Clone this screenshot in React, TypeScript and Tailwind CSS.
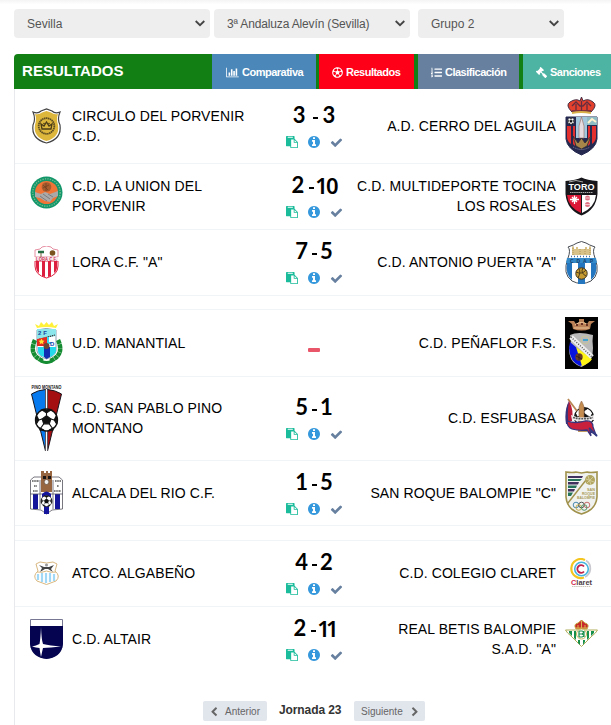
import type { ReactNode } from "react";
import { FaRegFutbol, FaListOl, FaGavel } from "react-icons/fa";

function Glyph({ d, w = 1792, className }: { d: string; w?: number; className?: string }) {
  return (
    <svg viewBox={`0 0 ${w} 1792`} fill="currentColor" className={className} aria-hidden="true">
      <path d={d} />
    </svg>
  );
}

const CHART = "M640 896v512h-256v-512h256zm384-512v1024h-256v-1024h256zm1024 1152v128h-2048v-1536h128v1408h1920zm-640-896v768h-256v-768h256zm384-384v1152h-256v-1152h256z";
const PASTE = "M768 1664h896v-640h-416q-40 0-68-28t-28-68v-416h-384v1152zm256-1440v-64q0-13-9.5-22.5t-22.5-9.5h-704q-13 0-22.5 9.5t-9.5 22.5v64q0 13 9.5 22.5t22.5 9.5h704q13 0 22.5-9.5t9.5-22.5zm256 672h299l-299-299v299zm512 128v672q0 40-28 68t-68 28h-960q-40 0-68-28t-28-68v-160h-544q-40 0-68-28t-28-68v-1344q0-40 28-68t68-28h1088q40 0 68 28t28 68v328q21 13 36 28l408 408q28 28 48 76t20 88z";
const INFO = "M1152 1376v-160q0-14-9-23t-23-9h-96v-512q0-14-9-23t-23-9h-320q-14 0-23 9t-9 23v160q0 14 9 23t23 9h96v320h-96q-14 0-23 9t-9 23v160q0 14 9 23t23 9h448q14 0 23-9t9-23zm-128-896v-160q0-14-9-23t-23-9h-192q-14 0-23 9t-9 23v160q0 14 9 23t23 9h192q14 0 23-9t9-23zm640 416q0 209-103 385.5t-279.5 279.5-385.5 103-385.5-103-279.5-279.5-103-385.5 103-385.5 279.5-279.5 385.5-103 385.5 103 279.5 279.5 103 385.5z";
const CHECK = "M1671 566q0 40-28 68l-724 724-136 136q-28 28-68 28t-68-28l-136-136-362-362q-28-28-28-68t28-68l136-136q28-28 68-28t68 28l294 295 656-657q28-28 68-28t68 28l136 136q28 28 28 68z";
const LEFT = "M1427 301l-531 531 531 531q19 19 19 45t-19 45l-166 166q-19 19-45 19t-45-19l-742-742q-19-19-19-45t19-45l742-742q19-19 45-19t45 19l166 166q19 19 19 45t-19 45z";

/* ---- club crests ---- */

function Crest({ w = 33, h, className = "", children }: { w?: number; h: number; className?: string; children: ReactNode }) {
  return <svg width={w} height={h} viewBox={`0 0 ${w} ${h}`} className={`block shrink-0 ${className}`}>{children}</svg>;
}

function Ball({ x, y, r }: { x: number; y: number; r: number }) {
  return (
    <g transform={`translate(${x} ${y}) scale(${r / 10})`}>
      <circle r="10" fill="#fff" stroke="#111" strokeWidth="1.2" />
      <path d="M0-4 4-1 2.5 3.5h-5L-4-1z M-4-9 4-9 0-6.5z M9-4 7 0 9.5 4z M-9-4-7 0-9.5 4z M-6 7-2 9.5-6 9z M6 7 2 9.5 6 9z" fill="#111" stroke="#111" strokeWidth="1" />
      <path d="M0-4V-7M4-1 7 0M-4-1-7 0M2.5 3.5 5 7M-2.5 3.5-5 7" stroke="#111" strokeWidth="1" />
    </g>
  );
}

const Circulo = () => (
  <Crest h={36}>
    <path d="M3 4Q8 6 11 3L16.500 1 22 3Q25 6 30 4 27 11 30 17 32 31 16.500 35 1 31 3 17 6 11 3 4z" fill="#fff" stroke="#444" strokeWidth="1.200" />
    <path d="M5 6Q9 7 12 4.500L16.500 3 21 4.500Q24 7 28 6 26 11 28 17 30 29 16.500 33 3 29 5 17 7 11 5 6z" fill="#ddb63c" />
    <circle cx="16.500" cy="18" r="7.800" fill="none" stroke="#5a4b20" strokeWidth="1.800" strokeDasharray="1.500 .5" />
    <path d="M12 21 11 16 14 18 16.500 14 19 18 22 16 21 21z" fill="none" stroke="#4a3c16" strokeWidth="1.300" />
    <circle cx="14" cy="15.500" r=".8" fill="#4a3c16" /><circle cx="19" cy="15.500" r=".8" fill="#4a3c16" />
  </Crest>
);

const Union = () => (
  <Crest h={33} className="mb-2">
    <circle cx="16.500" cy="16.500" r="16" fill="#12966a" />
    <circle cx="16.500" cy="16.500" r="13.700" fill="none" stroke="#76bd91" strokeWidth="1.300" strokeDasharray="1.300 1.200" />
    <circle cx="16.500" cy="16.500" r="11.500" fill="#f07436" />
    <circle cx="16.500" cy="11" r="4.800" fill="#a65c2d" />
    <path d="M13 9 18 14M13 12 19 9M16 7V15" stroke="#6e3d20" strokeWidth=".7" />
    <path d="M5 16 11 18 15 16 20 18 28 15 28 20 23 22 20 26 15 25 10 22 5 21z" fill="#a9a9a9" />
    <path d="M13 18 20 23M10 20 17 25M18 18 23 21" stroke="#74706d" strokeWidth=".8" />
  </Crest>
);

const Lora = () => (
  <Crest h={33}>
    <path d="M5 4 10 3 12 1Q16.500-1 21 1L23 3 28 4 28 11H5z" fill="#fff" stroke="#e0748b" strokeWidth=".8" />
    <path d="M5 15H28V20Q28 29 16.500 32 5 29 5 20z" fill="#fff" stroke="#df2543" />
    <path d="M6 15H9V27Q6 25 6 20zM12 15H15V31L12 30zM18 15H21V30L18 31zM24 15H27V22Q27 25 24 27z" fill="#dc1f3e" />
    <path d="M8 6H14" stroke="#246c42" strokeWidth="2.500" /><path d="M11 7V11" stroke="#786242" />
    <circle cx="22.500" cy="7" r="2.800" fill="#79521d" />
    <rect x="5" y="11" width="23" height="4" fill="#fbe8ec" />
    <text x="6" y="14.800" fontSize="4.500" fontWeight="700" fill="#c73251" textLength="21" lengthAdjust="spacingAndGlyphs">LORA C.F.</text>
  </Crest>
);

const Manantial = () => (
  <Crest h={42}>
    <path d="M5 18Q-2 33 13 39M28 18Q35 33 20 39" fill="none" stroke="#158b32" strokeWidth="4.500" strokeDasharray="4 .3" />
    <path d="M11 39Q16.500 42 22 39" fill="none" stroke="#158b32" strokeWidth="3" />
    <path d="M7 6 5 2 9 4 11 0 14 3 16.500 0 19 3 22 0 24 4 28 2 26 6Q16 4 7 6z" fill="#fff13a" />
    <path d="M7 8Q16 5 26 8V29Q25 34 16.500 37 8 34 7 29z" fill="#fff" stroke="#57778c" strokeWidth=".7" />
    <path d="M7 7H26V14L7 17z" fill="#8ce7ed" />
    <text x="8" y="13" fontSize="6" fontWeight="700" fill="#1744a0">2 F</text>
    <path d="M7 18 25 13" stroke="#333" strokeWidth="1.200" strokeDasharray="1.500 .7" />
    <path d="M7 17 17 15V24H7z" fill="#e52b20" /><path d="m11.500 16.500 1 2 2 .2-1.500 1.500.4 2-1.900-1-1.900 1 .4-2-1.500-1.500 2-.2z" fill="#ffe52e" />
    <path d="M18 15V21H21" fill="none" stroke="#3bd8f1" strokeWidth="2" />
    <text x="20" y="24" fontSize="6" fontWeight="700" fill="#183eb1">D</text>
    <path d="M8 25H14V35Q8 33 8 29zM20 25H26V29Q25 33 20 35z" fill="#25d9ec" /><path d="M14 25H20V35L16.500 37 14 35z" fill="#102eb1" />
    <circle cx="16.500" cy="24" r="3" fill="#6c4632" />
  </Crest>
);

const PinoMontano = () => (
  <Crest h={68} className="overflow-visible">
    <text x="1.500" y="5" fontSize="4.500" fontWeight="700" fill="#111" textLength="30" lengthAdjust="spacingAndGlyphs">PINO MONTANO</text>
    <path d="M1.500 10Q8 6 15.500 5.500V67z" fill="#087af0" stroke="#17151d" />
    <path d="M31.500 10Q25 6 17.500 5.500V67z" fill="#a40f12" stroke="#17151d" />
    <path d="M16.500 6V67" stroke="#fff" strokeWidth="1.600" />
    <Ball x={16.500} y={36} r={11} />
  </Crest>
);

const Alcala = () => (
  <Crest h={44}>
    <path d="M.5 9 4 6H29L32.500 9V38L22 39 16.500 43 11 39 .5 38z" fill="#fff" stroke="#55545e" strokeWidth=".8" />
    <path d="M3 23H8V38H3zM25 23H30V38H25zM14 35H19V43H14z" fill="#15159b" />
    <path d="M0 23H33M10 9V38M23 9V38" stroke="#575765" strokeWidth=".8" />
    <path d="M11 0V21H22V0H20V2H18V0H16V2H14V0z" fill="#976641" />
    <path d="M13 5H16V8H13zM18 5H21V8H18z" fill="#1b1516" /><circle cx="16.500" cy="11" r="2.500" fill="#eee" stroke="#765d4b" />
    <path d="M12 23Q16.500 18 21 23V26H12z" fill="#15159b" />
    <path d="M2 10H9M4 15H7M3 20H8M25 10H31M27 15H29M24 20H31" stroke="#555" strokeWidth="1.300" strokeDasharray="1.200 .4" />
    <Ball x={16.500} y={30} r={5.500} />
  </Crest>
);

const Algabeno = () => (
  <Crest h={24}>
    <path d="M6 3 10 1 16.500 2 23 1 27 3 25 10Q31 15 26 20L16.500 23.500 7 20Q2 15 8 10z" fill="#fff" stroke="#d9b880" />
    <path d="M8 13V19M12 12V21M16 12V22M20 12V21M24 13V20" stroke="#a1d8f5" strokeWidth="2.200" />
    <path d="M9 4 14 6 19 6 24 4 21 8 23 11 18 8 15 8 10 11 12 7z" fill="#444" />
    <path d="M7 11Q12 12 16.500 10 21 12 26 11" fill="none" stroke="#d9b880" />
    <circle cx="16.500" cy="4" r="1.500" fill="#999" />
  </Crest>
);

const Altair = () => (
  <Crest h={40}>
    <path d="M.5.5H32.500V25C32 34 25 38 16.500 39.500 8 38 1 34 .5 25z" fill="#fff" stroke="#777794" />
    <path d="M0 7H33V25C32 35 25 39 16.500 40 8 39 1 35 0 25z" fill="#040451" />
    <path d="M11 8Q11.500 21 13 25 20 26.500 31 27.500 20 28.500 13 29 12 33 11 38 10 33 9.500 29 6 28.500 2 27.500 6 26.500 9.500 25 10.500 20 11 8z" fill="#fff" />
  </Crest>
);

const Cerro = () => (
  <Crest h={59}>
    <path d="M7 15Q0 8 5 5 11 1 15 4L16.500 0 18 4Q23 1 28 5 33 8 26 15z" fill="#e3402d" stroke="#432d43" />
    <path d="M7 9 11 5 15 9 18 9 22 5 26 9M7 14H26M11 7V13M22 7V13M16.500 4V14" fill="none" stroke="#632d40" strokeWidth="1.300" />
    <path d="M7 16Q16 14 26 16" stroke="#d8b14b" strokeWidth="2" fill="none" />
    <path d="M1 20H32V42Q31 52 16.500 58 2 52 1 42z" fill="#252950" stroke="#252950" />
    <path d="M2 29H6V47Q2 44 2 40zM27 29H31V40Q31 44 27 47z" fill="#e3302f" />
    <path d="M8 29H10V49L8 47zM23 29H25V47L23 49z" fill="#e3302f" />
    <path d="M11 20H22V41H11z" fill="#a2c8dd" /><path d="M14 41V29L16.500 20 19 29V41z" fill="#e5dce1" stroke="#9b695d" strokeWidth=".6" />
    <path d="M22 20H32V28H22z" fill="#8ebcc5" /><path d="M23 26 27 22 31 25" fill="none" stroke="#fff4cd" strokeWidth="2" />
    <Ball x={6} y={24} r={3.300} />
    <path d="M8 39 13 46 16.500 41 20 46 26 39 22 49 16.500 52 11 49z" fill="#a8864a" stroke="#342c34" strokeWidth=".8" />
    <path d="M8 50Q16.500 55 25 50" stroke="#8c8394" fill="none" strokeDasharray="1 1" />
  </Crest>
);

const Toro = () => (
  <Crest h={39}>
    <path d="M.5 4Q11 3 16.500.5 22 3 32.500 4V17Q31 33 16.500 38.500 2 33 .5 17z" fill="#17171b" />
    <path d="M2 18H16V36Q3 30 2 18z" fill="#dc1635" /><path d="M17 18H31Q30 30 17 36z" fill="#fff" />
    <text x="3.500" y="13" fontSize="9" fontWeight="700" fill="#fff" textLength="26" lengthAdjust="spacingAndGlyphs">TORO</text>
    <path d="M4 5Q11 2 18 5" stroke="#ccc" strokeWidth=".8" fill="none" />
    <path d="M5 15.500H28" stroke="#aaa" strokeWidth="1.200" strokeDasharray="1.500 .6" />
    <path d="M9.500 18.500V27M5 22.500H14M7 20 12 25M12 20 7 25" stroke="#fff" strokeWidth="1.300" />
    <circle cx="22.500" cy="21" r="2.500" fill="#df7183" /><circle cx="22.500" cy="27.500" r="2.500" fill="#df7183" />
    <path d="M20 21H25M20 27.500H25" stroke="#fff" strokeWidth=".6" />
  </Crest>
);

const Puerta = () => (
  <Crest h={43}>
    <path d="M3 17Q6 9 3 6 9 4 12 2 16.500-1 21 2 24 4 30 6 27 9 30 17 36 33 26 40 16.500 45 7 40-3 33 3 17z" fill="#fff" stroke="#484d54" />
    <path d="M7 6H9V8H11V6H13V8H15V14H7zM18 8H20V6H22V8H24V6H26V14H18zM12 8H21V14H12z" fill="#d8c287" />
    <path d="M8 5V15M15 8V14M20 8V14M25 5V15" stroke="#aa8e4e" strokeWidth=".8" strokeDasharray="1 1" />
    <path d="M6 15.500H27" stroke="#426da2" strokeWidth="1.500" strokeDasharray="1 2" />
    <path d="M2 22H7V39Q0 33 2 22zM13 22H20V43H13zM26 22H31Q33 33 26 39z" fill="#2476bf" />
    <path d="M2 17H31L32 22H1z" fill="#358bc9" />
    <text x="5" y="21.500" fontSize="5" fontWeight="700" fill="#173e6b" textLength="23">CDAP</text>
    <circle cx="16.500" cy="32.500" r="5.700" fill="#c59b32" stroke="#403622" />
    <path d="M11 31Q17 34 21 29M13 37Q16 31 14 28M18 27Q15 32 21 35" stroke="#4b3c1c" fill="none" />
  </Crest>
);

const Penaflor = () => (
  <Crest h={52}>
    <path d="M0 0H33V52H0z" fill="#020202" />
    <path d="M8 12 7 7 3 4 9 4 11 7 14 5 14 2 19 2 19 5 22 7 24 4 30 4 26 7 25 12Q16.500 15 8 12z" fill="#ba8056" />
    <path d="M10 8Q16 3 23 8M9 11H24" stroke="#edc79a" fill="none" /><path d="M11 8H13M16 7H18M21 8H23" stroke="#682f23" strokeWidth="2" />
    <path d="M5 18Q13 14 28 18Q27 24 28 31 28 44 20 48L16.500 50 12 48Q4 44 4 31 7 25 5 18z" fill="#b9b9b9" />
    <path d="M5 25 20 38 19 47 15 49Q5 45 4 31z" fill="#0712dd" /><path d="M11 30 27 42Q25 46 17 49z" fill="#fff416" />
    <path d="M6 20 27 40" stroke="#eee" strokeWidth="5" /><path d="M6 20 27 40" stroke="#555" strokeWidth="1.500" strokeDasharray="1 1.500" />
    <circle cx="20" cy="23" r="4" fill="none" stroke="#c8c59a" /><path d="M18 23H23" stroke="#37a2d3" strokeWidth="1.800" />
    <circle cx="14" cy="40" r="3.700" fill="#693d25" /><path d="M11 39 17 42M14 37V43" stroke="#21140e" strokeWidth=".7" />
  </Crest>
);

const Esfubasa = () => (
  <Crest h={40}>
    <Ball x={19} y={19} r={9.500} />
    <path d="M13 22H22V34H13z" fill="#c19a61" /><path d="M14 24V9L15 6 16.500 3 18 6 19 9V24z" fill="#c58c50" stroke="#8b6247" strokeWidth=".6" />
    <path d="M3 1 12 13" stroke="#b78653" strokeWidth="1.800" />
    <path d="M4 3Q0 12 1 25L7 23Q9 12 4 3z" fill="#b91c38" /><path d="M4 3Q-1 12 1 26L3.500 26Q2 13 4 3z" fill="#34347d" />
    <path d="M6 17Q17 22 29 17V22Q17 24 7 22z" fill="#f0eeee" /><path d="M8 19.500Q17 22 28 19.500" stroke="#555" fill="none" strokeWidth="1.700" strokeDasharray="2 .8" />
    <path d="M2 23Q10 26 20 23 28 22 28 29L31 37 25 33 26 38 22 32Q14 33 7 31 2 29 2 23z" fill="#c9213d" stroke="#38347e" strokeWidth="1.300" />
    <path d="M24 30 32 38" stroke="#333c82" strokeWidth="2" />
  </Crest>
);

const SanRoque = () => (
  <Crest h={44}>
    <path d="M1 1Q8 2 11 1L16.500 2 22 1Q25 2 32 1V26Q31 39 16.500 43 2 39 1 26z" fill="#f0f2ef" stroke="#a0914b" strokeWidth="1.600" />
    <path d="M3 5H18L17 7H3zM3 11H14L13 13.500H3zM3 18H10L9 20.500H3z" fill="#41315e" />
    <path d="M3 8H17L15 10H3zM3 14.500H12L11 17H3zM3 21.500H8L6 25H3z" fill="#25745a" />
    <path d="M3 32 21 9" stroke="#a0914b" strokeWidth="1.400" /><circle cx="25" cy="9" r="5" fill="#b1a55f" /><path d="M21 8 29 11M22 12 28 6M23 5 26 14" stroke="#dcd6a8" strokeWidth=".8" />
    <g fontSize="4" fontWeight="700" fill="#a99955">
      <text x="22" y="20" textLength="8" lengthAdjust="spacingAndGlyphs">SAN</text>
      <text x="17" y="24" textLength="13" lengthAdjust="spacingAndGlyphs">ROQUE</text>
      <text x="12" y="28" textLength="18" lengthAdjust="spacingAndGlyphs">BALOMPIE</text>
    </g>
    <g fill="none" strokeWidth="1"><circle cx="11" cy="34" r="2.800" stroke="#488ab1" /><circle cx="16.500" cy="34" r="2.800" stroke="#555" /><circle cx="22" cy="34" r="2.800" stroke="#c76b6b" /><circle cx="13.700" cy="36.500" r="2.800" stroke="#c4ad4c" /><circle cx="19.200" cy="36.500" r="2.800" stroke="#519668" /></g>
  </Crest>
);

const Claret = () => (
  <Crest h={30}>
    <g fill="none"><path d="M20 2A9.500 9.500 0 1 0 19 19.500" stroke="#f4c51f" strokeWidth="2.200" /><path d="M21 2.500A9.500 9.500 0 0 1 20 19" stroke="#c9c8cf" strokeWidth="1.800" />
      <circle cx="16.500" cy="11" r="6.800" stroke="#45b5df" strokeWidth="1.600" /><path d="M19 8.500A3.800 3.800 0 1 0 19 13.500" stroke="#c1224b" strokeWidth="1.800" /></g>
    <text x="6" y="26.500" fontSize="7" fontWeight="700" fill="#4b3c42" textLength="21" lengthAdjust="spacingAndGlyphs"><tspan fill="#d02c4d">C</tspan>laret</text>
    <path d="M7 28.500H26" stroke="#ccc7ba" strokeWidth="1" strokeDasharray="1.500 .6" />
  </Crest>
);

const Betis = () => (
  <Crest h={27} className="mb-3">
    <path d="M11 9Q8 4 13 3L16.500 0 20 3Q25 4 22 9z" fill="#c82a2b" stroke="#c7ac48" /><path d="M11 8H22M13 5V8M20 5V8M16.500 1V8" stroke="#d8b849" />
    <path d="M.5 10H32.500Q31 13 27 16L16.500 26.500 6 16Q2 13 .5 10z" fill="#fff" stroke="#b0ad59" />
    <path d="M4 11H7V16L4 13zM9 11H11V20L9 18zM22 11H24V18L22 20zM26 11H29V13L26 16zM13 20H15V25L13 23zM18 20H20V22L18 25z" fill="#168f4b" />
    <circle cx="16.500" cy="14" r="5" fill="#fff" stroke="#c7b95b" /><path d="M14 11V17M14 11H17Q20 12 17 14H14M17 14Q21 16 17 17H14M19 11V17" fill="none" stroke="#168f4b" strokeWidth="1.200" />
  </Crest>
);

/* ---- page ---- */

type Match = {
  row: string;
  home: string[];
  away: string[];
  homeCrest: ReactNode;
  awayCrest: ReactNode;
  score?: [string, string];
  dash?: string;
};

const GROUPS: Match[][] = [
  [
    { row: "h-[75px]", home: ["CIRCULO DEL PORVENIR", "C.D."], away: ["A.D. CERRO DEL AGUILA"], homeCrest: <Circulo />, awayCrest: <Cerro />, score: ["3", "3"], dash: "ml-[7px] mr-[5px]" },
    { row: "h-[66px] pb-px", home: ["C.D. LA UNION DEL", "PORVENIR"], away: ["C.D. MULTIDEPORTE TOCINA", "LOS ROSALES"], homeCrest: <Union />, awayCrest: <Toro />, score: ["2", "10"], dash: "ml-[5px] mr-[1px]" },
    { row: "h-[66px] pb-px", home: ['LORA C.F. "A"'], away: ['C.D. ANTONIO PUERTA "A"'], homeCrest: <Lora />, awayCrest: <Puerta />, score: ["7", "5"] },
  ],
  [
    { row: "h-[67px]", home: ["U.D. MANANTIAL"], away: ["C.D. PEÑAFLOR F.S."], homeCrest: <Manantial />, awayCrest: <Penaflor /> },
    { row: "h-[84px] pb-px", home: ["C.D. SAN PABLO PINO", "MONTANO"], away: ["C.D. ESFUBASA"], homeCrest: <PinoMontano />, awayCrest: <Esfubasa />, score: ["5", "1"] },
    { row: "h-[65px]", home: ["ALCALA DEL RIO C.F."], away: ['SAN ROQUE BALOMPIE "C"'], homeCrest: <Alcala />, awayCrest: <SanRoque />, score: ["1", "5"] },
  ],
  [
    { row: "h-[66px] pb-px", home: ["ATCO. ALGABEÑO"], away: ["C.D. COLEGIO CLARET"], homeCrest: <Algabeno />, awayCrest: <Claret />, score: ["4", "2"] },
    { row: "h-[66px] pb-px border-transparent", home: ["C.D. ALTAIR"], away: ["REAL BETIS BALOMPIE", 'S.A.D. "A"'], homeCrest: <Altair />, awayCrest: <Betis />, score: ["2", "11"], dash: "ml-[5px] mr-[1px]" },
  ],
];

function Goals({ value }: { value: string }) {
  // two-digit scores use the narrow, footless 1
  if (value === "11") return <span className="font-['Noto_Sans',sans-serif] font-semibold tracking-[-4px]">{value}</span>;
  if (value.length > 1) return <span className="font-['Noto_Sans',sans-serif] font-semibold tracking-[-2px]">{value}</span>;
  return <span>{value}</span>;
}

function Score({ score, dash = "ml-[4px] mr-[3px]" }: { score?: [string, string]; dash?: string }) {
  if (!score) return <div className="mt-[13px] mr-px h-1 w-3 rounded-[1px] bg-[#e9566a]" />;
  return (
    <div className="flex flex-col items-center">
      <div className="flex h-[26px] -translate-y-px items-center font-[Lato,sans-serif] text-[22px] font-bold leading-[26px] text-black">
        <Goals value={score[0]} /><span className={`h-[2px] w-[5px] translate-y-[3px] bg-black ${dash}`} /><Goals value={score[1]} />
      </div>
      <div className="mt-[7px] mb-px flex h-3 items-center">
        <Glyph d={PASTE} className="mr-[9px] size-3 text-[#1bbc9b]" />
        <Glyph d={INFO} className="mr-[9px] size-[14px] text-[#3598dc]" />
        <Glyph d={CHECK} className="size-[13px] text-[#67809f]" />
      </div>
    </div>
  );
}

function MatchRow({ m }: { m: Match }) {
  return (
    <div className={`flex items-center border-b border-[#f1f4f7] tracking-[0.100px] ${m.row}`}>
      <div className="ml-[15px] flex w-[33px] justify-center">{m.homeCrest}</div>
      <div className="ml-[9px] w-[186px]">{m.home.map(t => <div key={t}>{t}</div>)}</div>
      <div className="ml-[6px] flex w-[100px] justify-center tracking-normal"><Score score={m.score} dash={m.dash} /></div>
      <div className="w-[192px] flex-none text-right whitespace-nowrap">
        {m.away.map(t => <div key={t} className="flex justify-end">{t}</div>)}
      </div>
      <div className="ml-[9px] flex w-[33px] justify-center tracking-normal">{m.awayCrest}</div>
    </div>
  );
}

function Select({ label, className }: { label: string; className: string }) {
  return (
    <div className={`flex h-[29px] items-center justify-between rounded bg-[#eee] pr-[5px] pl-[13px] text-xs text-[#555] ${className}`}>
      <span>{label}</span>
      <svg width="10" height="7" viewBox="0 0 10 7" fill="none" stroke="#444" strokeWidth="1.800"><path d="M.7 1 5 5.200 9.300 1" /></svg>
    </div>
  );
}

function Tab({ icon, label, className }: { icon: ReactNode; label: string; className: string }) {
  return (
    <div className={`flex h-full shrink-0 items-center gap-[3px] pt-px text-[11px] font-bold tracking-[-0.500px] whitespace-nowrap text-white ${className}`}>
      {icon}<span>{label}</span>
    </div>
  );
}

export default function App() {
  return (
    <div className="h-[725px] w-[611px] overflow-hidden bg-white font-['Liberation_Sans',Arial,sans-serif] text-sm leading-5 text-black">
      <div className="h-[9px] bg-linear-to-b from-[#f4f4f4] to-white to-50%" />
      <div className="flex pl-[14px]">
        <Select label="Sevilla" className="w-[196px]" />
        <Select label="3ª Andaluza Alevín (Sevilla)" className="ml-1 w-[196px] tracking-[-0.150px]" />
        <Select label="Grupo 2" className="ml-2 w-[146px]" />
      </div>

      <div className="mt-4 ml-[14px] flex h-[35px] items-center rounded-tl bg-[#117f13]">
        <h1 className="w-[198px] shrink-0 pb-px pl-2 text-[15px] font-bold tracking-[0.050px] text-white">RESULTADOS</h1>
        <Tab label="Comparativa" className="w-[104px] bg-[#4b87b9] pl-[14px]" icon={<Glyph d={CHART} w={2048} className="h-[11px] w-[13px]" />} />
        <Tab label="Resultados" className="ml-[3px] w-[95px] bg-[#ff0019] pl-[13px]" icon={<FaRegFutbol className="size-[11px]" />} />
        <Tab label="Clasificación" className="ml-1 w-[101px] bg-[#67809f] pl-[13px]" icon={<FaListOl className="size-[11px]" />} />
        <Tab label="Sanciones" className="ml-1 w-[88px] bg-[#4db3a2] pl-[13px]" icon={<FaGavel className="size-[11px] -scale-x-100" />} />
      </div>

      <div className="ml-[14px] h-[636px] border-l border-[#e7e9ed]">
        {GROUPS.map((group, i) => (
          <div key={i}>
            {i > 0 && <div className={i === 1 ? "h-[14px] border-b border-[#f1f4f7]" : "h-[15px] border-b border-[#f1f4f7]"} />}
            {group.map(m => <MatchRow key={m.home[0]} m={m} />)}
          </div>
        ))}
        <div className="mt-[28px] ml-[188px] flex h-5 items-center text-[10px] text-[#666]">
          <button className="flex h-5 w-16 items-center rounded-[2px] bg-[#e1e5ec] pt-px pl-[6px]">
            <Glyph d={LEFT} className="mr-[6px] size-[10px]" />Anterior
          </button>
          <span className="ml-3 w-[62px] pb-[2px] text-xs font-bold tracking-[-0.100px] whitespace-nowrap text-[#333]">Jornada 23</span>
          <button className="ml-[13px] flex h-5 w-[71px] items-center rounded-[2px] bg-[#e1e5ec] pt-px pl-[7px]">
            Siguiente<Glyph d={LEFT} className="ml-[7px] size-[10px] -scale-x-100" />
          </button>
        </div>
      </div>
    </div>
  );
}
